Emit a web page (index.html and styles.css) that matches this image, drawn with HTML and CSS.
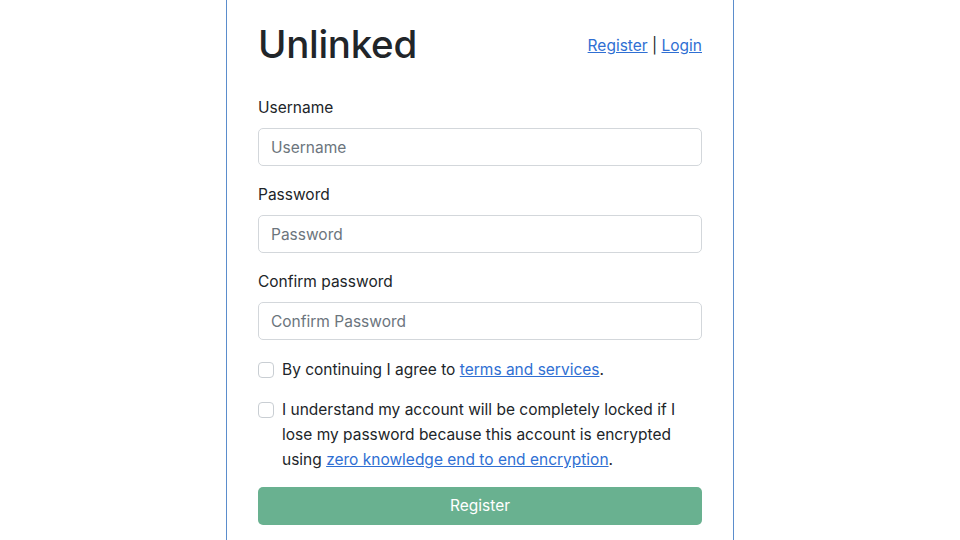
FILE: index.html
```html
<!DOCTYPE html>
<html lang="en">
<head>
<meta charset="utf-8">
<title>Unlinked - Register</title>
<link rel="stylesheet" href="styles.css">
</head>
<body>
<main class="card">
  <header class="card-header">
    <h1 class="brand">Unlinked</h1>
    <nav class="auth-nav"><a href="#">Register</a> | <a href="#">Login</a></nav>
  </header>
  <form class="form">
    <div class="field">
      <label class="label" for="username">Username</label>
      <input class="input" id="username" type="text" placeholder="Username">
    </div>
    <div class="field">
      <label class="label" for="password">Password</label>
      <input class="input" id="password" type="password" placeholder="Password">
    </div>
    <div class="field">
      <label class="label" for="confirm">Confirm password</label>
      <input class="input" id="confirm" type="password" placeholder="Confirm Password">
    </div>
    <div class="check">
      <input class="check-input" type="checkbox" id="terms">
      <label class="check-label" for="terms">By continuing I agree to <a href="#">terms and services</a>.</label>
    </div>
    <div class="check">
      <input class="check-input" type="checkbox" id="zk">
      <label class="check-label" for="zk">I understand my account will be completely locked if I lose my password because this account is encrypted using <a href="#">zero knowledge end to end encryption</a>.</label>
    </div>
    <button class="btn" type="submit" disabled>Register</button>
  </form>
</main>
</body>
</html>
```
FILE: styles.css
```css
* { box-sizing: border-box; }
html, body { margin: 0; padding: 0; background: #fff; }
body {
  font-family: Inter, "Noto Sans", sans-serif;
  font-size: 15.5px;
  line-height: 24px;
  color: #212529;
}
a { color: #2f6fd3; text-decoration: underline; }
.card {
  width: 508px;
  margin: 0 auto;
  min-height: 560px;
  border-left: 1px solid #5b8dcc;
  border-right: 1px solid #5b8dcc;
  padding: 20px 31px 0;
}
.card-header {
  display: flex;
  justify-content: space-between;
  align-items: center;
  margin-bottom: 28px;
}
.brand {
  margin: 0;
  font-size: 38.5px;
  line-height: 48px;
  font-weight: 500;
  letter-spacing: -0.3px;
}
.auth-nav { color: #212529; padding-top: 4px; }
.field { margin-bottom: 17px; }
.label { display: block; margin-bottom: 8px; line-height: 24px; }
.input {
  display: block;
  width: 100%;
  height: 38px;
  padding: 6px 12px;
  font: inherit;
  color: #212529;
  border: 1px solid #d3d7db;
  border-radius: 5px;
  background: #fff;
}
.input::placeholder { color: #6c757d; }
.check {
  display: flex;
  align-items: flex-start;
  gap: 8px;
  margin-bottom: 15px;
}
.check-input {
  appearance: none;
  width: 16px;
  height: 16px;
  margin: 5px 0 0;
  flex: none;
  border: 1px solid #c9ced3;
  border-radius: 4px;
  background: #fff;
}
.check-label { flex: 1; line-height: 25px; }
.btn {
  display: block;
  width: 100%;
  height: 38px;
  margin-top: 0;
  font: inherit;
  color: #fff;
  background: #69b190;
  border: 0;
  border-radius: 5px;
}
```
